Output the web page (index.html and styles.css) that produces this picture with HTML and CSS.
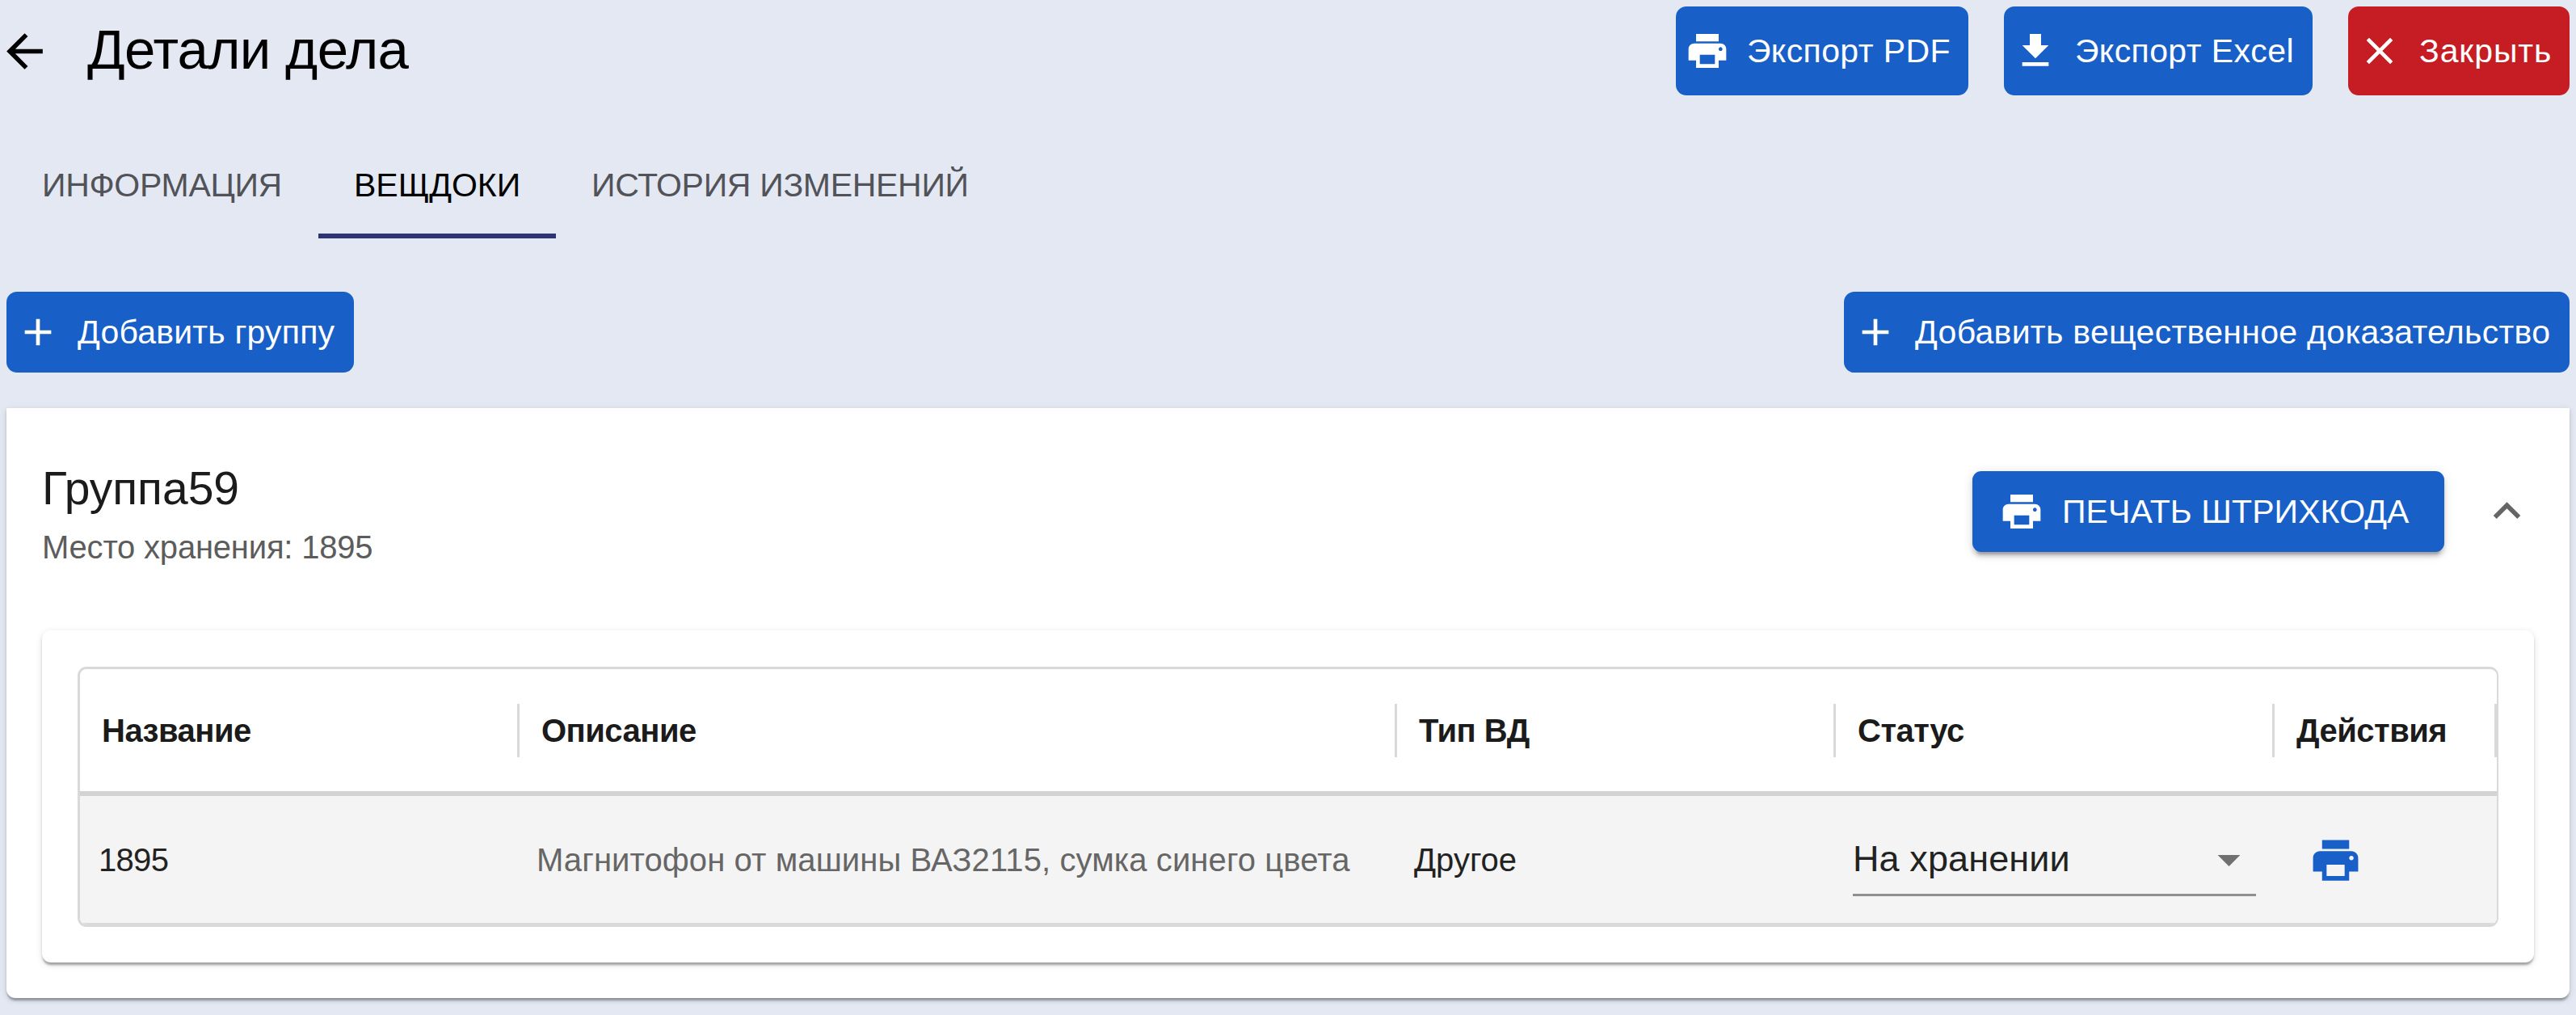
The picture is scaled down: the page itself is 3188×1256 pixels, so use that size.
FILE: index.html
```html
<!DOCTYPE html>
<html lang="ru">
<head>
<meta charset="utf-8">
<title>Детали дела</title>
<link rel="stylesheet" href="styles.css">
</head>
<body>
<svg class="sprite" aria-hidden="true">
  <symbol id="print" viewBox="0 0 24 24"><path d="M19 8H5c-1.660 0-3 1.340-3 3v6h4v4h12v-4h4v-6c0-1.660-1.340-3-3-3zm-3 11H8v-5h8v5zm3-7c-.55 0-1-.45-1-1s.45-1 1-1 1 .45 1 1-.45 1-1 1zm-1-9H6v4h12V3z"/></symbol>
  <symbol id="download" viewBox="0 0 24 24"><path d="M19 9h-4V3H9v6H5l7 7 7-7zM5 18v2h14v-2H5z"/></symbol>
  <symbol id="close" viewBox="0 0 24 24"><path d="M19 6.410 17.590 5 12 10.590 6.410 5 5 6.410 10.590 12 5 17.590 6.410 19 12 13.410 17.590 19 19 17.590 13.410 12z"/></symbol>
  <symbol id="add" viewBox="0 0 24 24"><path d="M19 13h-6v6h-2v-6H5v-2h6V5h2v6h6v2z"/></symbol>
  <symbol id="back" viewBox="0 0 24 24"><path d="M20 11H7.830l5.590-5.590L12 4l-8 8 8 8 1.410-1.410L7.830 13H20v-2z"/></symbol>
  <symbol id="less" viewBox="0 0 24 24"><path d="m12 8-6 6 1.410 1.410L12 10.830l4.590 4.580L18 14z"/></symbol>
  <symbol id="drop" viewBox="0 0 24 24"><path d="m7 10 5 5 5-5z"/></symbol>
</svg>

<header class="page-header">
  <div class="heading">
    <svg class="icon icon-lg"><use href="#back"/></svg>
    <h1 class="title">Детали дела</h1>
  </div>
  <div class="actions">
    <button class="btn btn-tall btn-pdf"><svg class="icon"><use href="#print"/></svg>Экспорт PDF</button>
    <button class="btn btn-tall btn-excel"><svg class="icon"><use href="#download"/></svg>Экспорт Excel</button>
    <button class="btn btn-tall btn-close"><svg class="icon"><use href="#close"/></svg>Закрыть</button>
  </div>
</header>

<nav class="tabs">
  <a class="tab tab-info">Информация</a>
  <a class="tab tab-evidence active">Вещдоки</a>
  <a class="tab">История изменений</a>
</nav>

<div class="toolbar">
  <button class="btn btn-group"><svg class="icon"><use href="#add"/></svg>Добавить группу</button>
  <button class="btn btn-evidence"><svg class="icon"><use href="#add"/></svg>Добавить вещественное доказательство</button>
</div>

<section class="card">
  <div class="card-header">
    <div class="card-heading">
      <h2 class="group-name">Группа59</h2>
      <p class="group-place">Место хранения: 1895</p>
    </div>
    <div class="card-tools">
      <button class="btn btn-print"><svg class="icon"><use href="#print"/></svg>Печать штрихкода</button>
      <svg class="icon icon-lg chevron"><use href="#less"/></svg>
    </div>
  </div>

  <div class="panel">
    <div class="table">
      <div class="row head">
        <div class="cell">Название</div>
        <div class="cell">Описание</div>
        <div class="cell">Тип ВД</div>
        <div class="cell">Статус</div>
        <div class="cell">Действия</div>
      </div>
      <div class="row body">
        <div class="cell number">1895</div>
        <div class="cell description">Магнитофон от машины ВАЗ2115, сумка синего цвета</div>
        <div class="cell">Другое</div>
        <div class="cell">
          <div class="select">На хранении<svg class="icon icon-lg"><use href="#drop"/></svg></div>
        </div>
        <div class="cell"><svg class="icon icon-lg row-print"><use href="#print"/></svg></div>
      </div>
    </div>
  </div>
</section>
</body>
</html>
```
FILE: styles.css
```css
* { box-sizing: border-box; }

body {
  margin: 0;
  padding: 8px;
  background: #e4e8f3;
  color: #000;
  font: 41px "Liberation Sans", Arial, sans-serif;
  white-space: nowrap;
}

h1, h2, p { margin: 0; font-weight: 400; }

.sprite { display: none; }
.icon { width: 56px; height: 56px; fill: currentColor; flex: none; }
.icon-lg { width: 67px; height: 67px; }

.page-header {
  display: flex;
  justify-content: space-between;
  height: 110px;
}
.heading { display: flex; align-items: center; gap: 44px; margin-left: -11px; }
.title { font-size: 69px; line-height: 82px; letter-spacing: -0.7px; padding-bottom: 3px; }
.actions { display: flex; gap: 44px; }

.btn {
  display: flex;
  align-items: center;
  gap: 21px;
  height: 100px;
  padding: 0 0 0 11px;
  border: 0;
  border-radius: 13px;
  background: #185fc7;
  color: #fff;
  font: inherit;
  line-height: 56px;
  letter-spacing: 0.3px;
}
.btn-tall { height: 110px; }
.btn-pdf { width: 362px; letter-spacing: 0.4px; }
.btn-excel { width: 382px; letter-spacing: 0.4px; }
.btn-close { width: 274px; letter-spacing: 0.9px; background: #c61c24; }
.btn-group { width: 430px; letter-spacing: 0.2px; }
.btn-evidence { width: 898px; }

.tabs { display: flex; margin-top: 45px; height: 132px; }
.tab {
  display: flex;
  align-items: center;
  padding: 6px 44px 0;
  border-bottom: 6px solid transparent;
  color: #515358;
  letter-spacing: -0.3px;
  text-transform: uppercase;
}
.tab-info { width: 386px; }
.tab-evidence { width: 294px; letter-spacing: 0; }
.tab.active { color: #000; border-color: #2c3474; }

.toolbar { display: flex; justify-content: space-between; margin-top: 66px; }

.card {
  height: 730px;
  margin-top: 44px;
  padding: 0 44px;
  background: #fff;
  border-radius: 0 0 11px 11px;
  box-shadow: 0 5.5px 2.75px -2.75px rgba(0,0,0,.2), 0 2.75px 2.75px rgba(0,0,0,.14), 0 2.75px 8.25px rgba(0,0,0,.12);
}
.card-header {
  display: flex;
  justify-content: space-between;
  align-items: center;
  height: 275px;
  padding-bottom: 20px;
}
.card-heading { padding-top: 7px; }
.group-name { font-size: 57px; line-height: 72px; color: #1b1b1b; }
.group-place { margin-top: 9px; font-size: 40px; line-height: 56px; letter-spacing: -0.2px; color: #5c5c5c; }
.card-tools { display: flex; align-items: center; gap: 44px; }
.btn-print {
  width: 584px;
  gap: 22px;
  padding-left: 33px;
  border-radius: 11px;
  text-transform: uppercase;
  letter-spacing: 0.1px;
  box-shadow: 0 8.25px 2.75px -5.5px rgba(0,0,0,.2), 0 5.5px 5.5px rgba(0,0,0,.14), 0 2.75px 13.75px rgba(0,0,0,.12);
}
.chevron { color: #666; }

.panel {
  height: 411px;
  padding: 45px 44px;
  border-radius: 11px;
  box-shadow: 0 5.5px 2.75px -2.75px rgba(0,0,0,.2), 0 2.75px 2.75px rgba(0,0,0,.14), 0 2.75px 8.25px rgba(0,0,0,.12);
}
.table {
  height: 322px;
  border: 3px solid #d9d9d9;
  border-width: 3px 2px 3px 3px;
  border-radius: 11px;
  overflow: hidden;
  font-size: 40px;
  color: #222;
}
.row { display: grid; grid-template-columns: 544px 1086px 543px 543px 1fr; align-items: center; }
.head {
  height: 157px;
  border-bottom: 6px solid #d3d3d3;
  font-weight: 700;
  letter-spacing: -0.5px;
  color: #1b1b1b;
}
.head .cell { height: 66px; line-height: 66px; padding-left: 27px; border-right: 3px solid #d9d9d9; }
.body { height: 159px; padding-top: 2px; background: #f4f4f4; border-bottom: 2px solid #d9d9d9; }
.body .cell { padding: 0 23px 0 21px; }
.body .number { padding-left: 23px; letter-spacing: -0.7px; }
.description { color: #666; letter-spacing: 0.1px; }
.select {
  display: flex;
  align-items: center;
  justify-content: space-between;
  height: 89px;
  border-bottom: 3px solid #8f8f8f;
  font-size: 45px;
  letter-spacing: 0.1px;
}
.select .icon { color: #707070; }
.row-print { display: block; margin-left: 21px; color: #185fc7; }
```
